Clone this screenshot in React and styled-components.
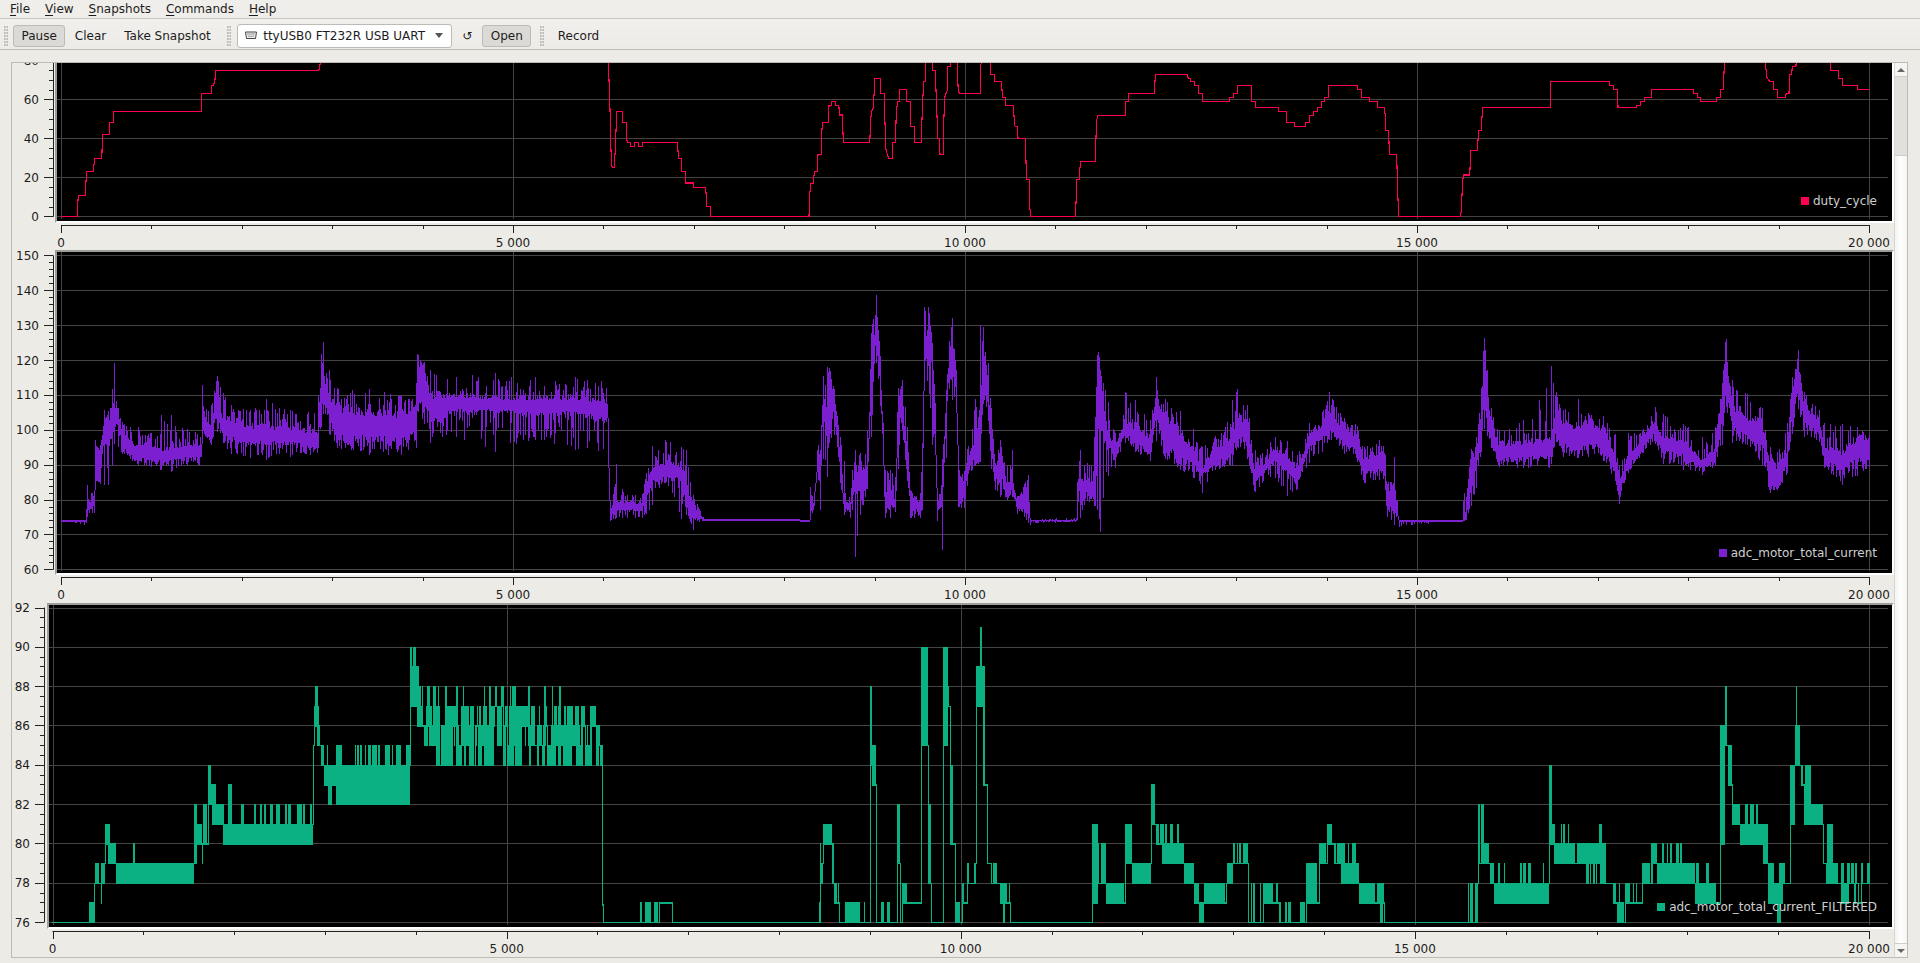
import React from 'react';
import styled, { createGlobalStyle } from 'styled-components';

const GlobalStyle = createGlobalStyle`
  html, body { margin: 0; height: 100%; overflow: hidden; }
  body { background: #edebe6; color: #1c1c1c; font: 12px "DejaVu Sans", sans-serif; }
`;

const Window = styled.div`
  height: 963px;
  display: flex;
  flex-direction: column;
`;

const MenuBar = styled.div`
  height: 18px;
  display: flex;
  align-items: center;
  padding-left: 4px;
  background: #f0eeea;
  border-bottom: 1px solid #c9c7c2;
`;

const MenuItem = styled.span`
  padding: 0 6px;
  margin-right: 3px;
  u { text-underline-offset: 2px; }
`;

const ToolBar = styled.div`
  height: 31px;
  box-sizing: border-box;
  display: flex;
  align-items: center;
  padding: 3px 0 0 4px;
  background: linear-gradient(#f2f0ed, #edebe6);
  border-bottom: 1px solid #bdbbb6;
`;

const Handle = styled.div`
  width: 4px;
  height: 20px;
  margin: ${(p) => p.$margin};
  background-image: radial-gradient(circle at 1px 1px, #bcbab5 1px, transparent 1.2px);
  background-size: 2.5px 3px;
`;

const ToolButton = styled.button`
  height: 22px;
  box-sizing: border-box;
  padding: 0 7.5px;
  margin-right: 1px;
  font: inherit;
  color: inherit;
  background: ${(p) => (p.$down ? '#dcdad6' : 'transparent')};
  border: 1px solid ${(p) => (p.$down ? '#bdbbb6' : 'transparent')};
  border-radius: 3px;
`;

const Combo = styled.div`
  width: 215px;
  height: 24px;
  box-sizing: border-box;
  display: flex;
  align-items: center;
  gap: 5px;
  padding: 0 6px;
  background: #fff;
  border: 1px solid #bdbbb6;
  border-radius: 3px;
`;

const ComboText = styled.span`
  flex: 1;
  white-space: nowrap;
`;

const ComboArrow = styled.span`
  width: 0;
  height: 0;
  margin-right: 2px;
  border: 4px solid transparent;
  border-top: 5px solid #555;
  border-bottom: 0;
`;

const Refresh = styled.span`
  width: 30px;
  text-align: center;
`;

const Frame = styled.div`
  height: 896px;
  box-sizing: border-box;
  margin: 12px 12px 0 11px;
  display: flex;
  overflow: hidden;
  border: 1px solid #bdbbb6;
`;

const Plots = styled.div`
  width: 1882px;
`;

const PlotBlock = styled.div`
  margin-top: ${(p) => p.$shift || 0}px;
`;

const PlotRow = styled.div`
  display: flex;
  height: ${(p) => p.$height}px;
`;

const Canvas = styled.div`
  position: relative;
  flex: 1;
  box-sizing: border-box;
  background: #000;
  border: 2px solid;
  border-color: #9f9d99 #fff #fff #9f9d99;
  overflow: hidden;
`;

const Chart = styled.svg`
  display: block;
`;

const Legend = styled.div`
  position: absolute;
  right: 15px;
  bottom: 12px;
  height: 16px;
  display: flex;
  align-items: center;
  gap: 4px;
  color: #cfcfcf;
`;

const Swatch = styled.span`
  width: 8px;
  height: 8px;
  background: ${(p) => p.$color};
`;

const AxisSvg = styled.svg`
  display: block;
  flex: none;
  font: 12px "DejaVu Sans", sans-serif;
  fill: #1c1c1c;
`;

const ScrollBar = styled.div`
  flex: 1;
  display: flex;
  flex-direction: column;
  background: linear-gradient(90deg, #f4f3f0, #fff 45%, #f6f5f2);
  border-left: 1px solid #d8d6d1;
`;

const ScrollButton = styled.div`
  height: 13px;
  display: flex;
  align-items: center;
  justify-content: center;
  background: #f6f5f2;
  border-${(p) => (p.$up ? 'bottom' : 'top')}: 1px solid #d0cec9;
  margin-top: ${(p) => (p.$up ? 0 : 'auto')};
  &::after {
    content: '';
    border: 4px solid transparent;
    border-${(p) => (p.$up ? 'top' : 'bottom')}: 0;
    border-${(p) => (p.$up ? 'bottom' : 'top')}: 4px solid #666;
  }
`;

const ScrollThumb = styled.div`
  height: 78px;
  background: #e1e0dc;
  border-bottom: 1px solid #cfcdc8;
`;

// zoom crops were read as [x, y...] with their own scale, put them back to page pixels
const toPage = (rows, baseX, baseY, sx, sy = 3) =>
  rows.map(([x, ...ys]) => [baseX + x / sx, ...ys.map((y) => baseY + y / sy)]);

const dutyA = toPage([
  [150,499],[190,499],[190,465],[192,436],[210,436],[210,414],[212,364],[229,364],[230,348],[232,325],[248,325],[250,308],
  [251,253],[268,253],[268,217],[278,217],[278,184],[493,184],[494,130],[518,130],[518,106],[524,106],[525,87],[528,87],
  [528,61],[781,61],[784,45],[785,30],
], 0, 50, 2.45);

const dutyB = toPage([
  [20,0],[20,8],[22,60],[24,122],[26,228],[28,312],[30,322],[36,322],[36,305],[39,220],[41,155],[55,155],[55,187],[65,187],
  [65,238],[68,247],[74,247],[75,259],[84,259],[85,247],[94,247],[95,259],[104,259],[105,247],[190,247],[192,295],[199,295],
  [201,334],[209,334],[210,369],[229,369],[230,382],[259,382],[260,405],[262,439],[270,439],[272,469],[512,469],[514,403],
  [516,370],[523,370],[525,334],[533,334],[534,284],[542,284],[544,207],[546,187],[560,187],[561,136],[567,136],[568,124],
  [576,124],[577,136],[585,136],[587,165],[594,165],[596,247],[661,247],[663,183],[665,155],[670,143],[673,55],[687,55],
  [688,100],[696,100],[698,177],[700,265],[704,283],[707,295],[716,295],[717,247],[724,247],[726,150],[730,124],[734,124],
  [735,88],[750,88],[751,124],[760,124],[761,199],[770,199],[771,247],[787,247],[790,143],[793,65],[797,65],[798,0],[814,0],
  [815,31],[822,31],[823,82],[826,177],[827,235],[832,235],[833,284],[842,284],[842,201],[844,115],[848,100],[851,90],
  [852,20],[858,20],[859,0],[876,0],[877,80],[880,100],[932,100],[933,15],[936,0],[956,0],[957,43],[966,43],[967,65],[984,65],
  [986,112],[993,112],[994,136],[1013,136],[1015,187],[1017,199],[1023,199],[1024,235],[1042,235],[1044,315],[1046,358],
  [1052,358],[1053,443],[1056,469],[1164,469],[1166,440],[1168,358],[1174,358],[1177,305],[1214,305],[1216,190],[1219,166],
  [1287,166],[1288,124],[1295,124],[1296,100],[1358,100],[1360,58],[1362,43],[1439,43],[1441,55],[1447,55],[1448,65],
  [1456,65],[1457,76],[1466,76],[1467,100],[1476,100],[1477,124],[1542,124],[1543,112],[1552,112],[1553,100],[1562,100],
  [1563,76],[1568,76],
], 600, 60, 2.45);

const dutyC = toPage([
  [0,76],[28,76],[29,124],[38,124],[39,142],[94,142],[95,154],[114,154],[115,187],[133,187],[134,199],[160,199],[161,187],
  [170,187],[171,166],[180,166],[181,154],[190,154],[191,142],[200,142],[201,124],[207,124],[208,112],[217,112],[218,76],
  [288,76],[289,88],[297,88],[298,112],[316,112],[317,124],[336,124],[337,142],[354,142],[356,172],[357,211],[363,211],
  [365,245],[366,283],[384,283],[385,333],[387,420],[389,469],[540,469],[543,445],[545,366],[548,345],[563,345],[565,271],
  [582,271],[584,211],[591,211],[593,172],[595,142],[760,142],[761,64],[905,64],[906,76],[915,76],[916,88],[925,88],[926,142],
  [971,142],[972,136],[980,136],[981,124],[990,124],[991,112],[1007,112],[1009,88],[1110,88],[1111,100],[1120,100],[1121,112],
  [1128,112],[1129,124],[1167,124],[1168,112],[1176,112],[1178,88],[1184,88],[1185,64],[1187,0],[1287,0],[1288,22],[1291,52],
  [1297,64],[1306,64],[1307,88],[1316,88],[1317,112],[1337,112],[1338,100],[1345,100],[1347,43],[1352,43],[1353,20],[1362,20],
  [1363,0],[1446,0],[1447,31],[1465,31],[1467,55],[1475,55],[1477,76],[1512,76],[1513,88],[1541,88],
], 1240, 60, 2.45);

const dutyPath = 'M' + [...dutyA, ...dutyB, ...dutyC].map(([x, y]) => `${x.toFixed(1)} ${y.toFixed(1)}`).join('L');

// current envelope: x, body top, body bottom, spike top, spike bottom
const currentEnv = [
  ...toPage([
    [4,570,572,570,572],[64,570,572,570,585],[65,560,572,560,585],[68,500,545,465,560],[80,520,540,490,545],[86,480,530,480,562],
    [88,340,420,330,450],[100,380,458,360,460],[110,260,340,240,465],[120,270,360,250,470],[130,230,350,205,430],[136,205,300,90,340],
    [146,240,290,230,350],[156,290,360,275,370],[175,320,380,290,385],[195,340,400,290,405],[230,340,395,310,410],[255,350,405,255,420],
    [280,345,405,255,425],[320,335,395,295,405],[358,335,395,310,415],[359,220,290,165,300],[380,290,340,240,352],[395,170,260,130,300],
    [410,250,320,185,335],[430,255,340,225,370],[480,280,350,240,385],[520,280,350,205,390],[580,285,350,240,382],[650,300,365,240,375],
    [659,135,230,80,300],[665,130,230,35,250],[680,180,280,120,310],[700,220,340,175,355],[780,235,340,175,375],[860,240,345,195,375],
    [900,215,320,175,375],[902,100,225,70,240],[920,100,225,95,280],[935,180,290,120,340],[1000,190,250,140,320],[1100,195,250,130,365],
    [1200,195,260,140,330],[1300,195,260,140,360],[1385,205,280,140,370],[1386,350,420,350,420],[1390,530,565,520,572],[1405,510,550,395,565],
    [1420,510,545,475,565],[1470,515,545,505,565],[1480,460,520,440,555],[1495,410,460,350,530],[1530,390,455,330,460],[1568,400,455,350,570],
  ], 60, 330, 2.529),
  [686, 480, 505, 450, 515], [693, 505, 520, 495, 530], [704, 519, 520, 519, 520], [799, 519, 520, 519, 520],
  ...toPage([
    [0,750,752,750,752],[28,750,752,750,752],[29,650,730,645,750],[40,700,722,695,730],[52,545,595,520,600],[60,560,585,540,720],
    [68,360,450,320,560],[80,400,510,290,640],[86,295,490,290,520],[100,350,440,340,490],[110,460,515,430,520],[120,540,620,500,640],
    [130,680,725,560,735],[150,700,725,695,745],[156,640,690,600,720],[165,580,680,540,860],[180,585,680,550,735],[200,590,650,510,670],
    [212,310,420,200,520],[226,110,240,48,260],[238,230,360,215,370],[248,440,545,430,555],[254,680,735,600,745],[270,630,720,600,745],
    [285,690,720,620,725],[292,370,430,360,620],[305,390,470,320,470],[320,520,600,450,620],[330,670,725,660,745],[360,695,722,670,745],
    [366,520,720,520,720],[372,170,280,110,350],[385,170,290,110,335],[395,210,290,200,520],[405,420,520,400,555],[410,705,730,700,745],
    [425,650,720,585,860],[436,395,510,395,625],[445,260,330,235,350],[455,190,330,130,385],[468,340,365,300,430],[474,625,710,570,710],
    [490,630,700,620,730],[500,560,630,540,650],[515,535,575,490,600],[540,395,575,165,575],[548,180,380,165,400],[562,330,410,250,420],
    [572,430,570,400,590],[585,590,640,580,660],[600,520,610,510,680],[620,640,680,590,690],[636,620,660,540,680],[650,690,725,680,730],
    [684,620,720,615,760],[690,750,752,750,765],[829,750,752,740,752],[830,650,720,645,750],[840,620,650,540,745],[860,630,670,580,690],
    [880,630,700,560,705],[890,390,600,260,720],[895,240,320,235,720],
  ], 800, 270, 3),
  ...toPage([
    [0,150,330,150,635],[15,340,380,240,470],[30,370,420,340,445],[50,290,350,215,370],[70,320,380,240,395],[100,340,410,305,425],
    [112,200,310,170,360],[130,280,400,235,415],[160,320,430,270,450],[185,380,440,320,470],[205,440,470,380,520],[230,380,440,350,450],
    [265,340,410,240,440],[275,270,350,205,380],[295,300,390,250,415],[310,440,500,390,520],[325,430,470,400,490],[350,380,430,350,470],
    [375,400,460,360,530],[395,440,500,410,510],[420,340,390,310,430],[445,310,360,280,400],[460,260,340,215,360],[490,320,385,295,400],
    [515,340,400,310,420],[530,410,470,380,490],[560,390,460,360,480],[572,385,470,380,490],[576,530,575,500,590],[590,470,580,390,615],
    [600,600,603,600,620],[729,600,603,600,603],[730,600,603,510,603],[735,560,600,540,603],[745,395,530,390,560],[755,400,455,360,510],
    [765,280,370,240,410],[770,80,280,25,320],[785,290,360,260,380],[800,370,425,330,440],[850,360,425,300,445],[905,350,415,125,445],
    [915,250,350,210,360],[930,300,390,270,410],[960,310,400,235,415],[980,290,380,280,410],[1010,320,400,285,420],[1035,400,460,340,480],
    [1043,480,530,440,552],[1060,400,450,340,460],[1090,350,390,330,400],[1115,290,350,260,370],[1130,350,400,280,430],[1170,350,420,310,450],
    [1210,420,450,350,465],[1235,380,430,330,440],[1250,220,320,195,380],[1257,80,200,45,250],[1270,250,330,180,370],[1300,290,360,220,375],
    [1330,300,370,260,430],[1345,420,490,380,520],[1360,430,510,400,510],[1380,380,450,320,470],[1390,190,300,180,350],[1402,110,230,80,260],
    [1415,250,320,215,350],[1445,290,350,270,365],[1455,370,430,310,445],[1490,390,460,310,495],[1520,350,430,320,470],[1547,345,420,340,440],
  ], 1100, 320, 2.01),
];

const makeRandom = (seed) => () => {
  seed = (seed * 1664525 + 1013904223) % 4294967296;
  return seed / 4294967296;
};

const buildCurrentPath = () => {
  const rnd = makeRandom(11);
  let out = '';
  let i = 0;
  let prevTop = null;
  let prevBottom = null;
  for (let x = 61; x <= 1869; x++) {
    let hitKey = false;
    while (i < currentEnv.length - 2 && currentEnv[i + 1][0] <= x) {
      i++;
      hitKey = true;
    }
    const a = currentEnv[i];
    const b = currentEnv[i + 1];
    const t = Math.max(0, Math.min(1, (x - a[0]) / Math.max(b[0] - a[0], 0.01)));
    const at = (k) => a[k] + (b[k] - a[k]) * t;
    const body = at(2) - at(1);
    let top = at(1) + rnd() * body * 0.25;
    let bottom = at(2) - rnd() * body * 0.25;
    if (rnd() < 0.5) top = at(3) + (at(1) - at(3)) * rnd();
    if (rnd() < 0.5) bottom = at(4) - (at(4) - at(2)) * rnd();
    if (hitKey) {
      top = at(3);
      bottom = at(4);
    }
    if (prevTop !== null) {
      // the trace is one line: a column always touches the one before it
      if (bottom < prevTop) bottom = prevTop;
      if (top > prevBottom) top = prevBottom;
    }
    if (bottom - top < 1.5) bottom = top + 1.5;
    out += `M${x + 0.5} ${top.toFixed(1)}V${bottom.toFixed(1)}`;
    prevTop = top;
    prevBottom = bottom;
  }
  return out;
};

// filtered trace: x0, x1, low value, high value, how much of the span is filled
const level = (v) => 922 - (v - 76) * 19.66;

const filteredA = [
  [88,108,76,77,.7],[108,111,76,78,1],[110,120,78,79,1],[125,135,78,79,.6],[125,127,77,78,1],[135,148,80,81,1],[135,148,79,80,.3],
  [145,162,79,80,1],[162,352,78,79,1],[162,352,79,80,.02],[352,360,79,82,.8],[360,372,80,81,1],[372,376,79,80,.5],[375,386,80,82,.6],
  [388,394,83,84,1],[386,407,82,83,.9],[397,425,81,82,1],[425,645,80,81,1],[425,645,81,82,.55],[435,445,82,83,.4],[645,648,81,85,1],
  [647,660,86,87,1],[650,657,87,88,1],[645,670,85,86,.5],[660,682,84,85,.7],[672,882,83,84,1],[700,882,82,83,1],[682,700,82,83,.5],
  [682,882,84,85,.4],[882,885,84,89,1],[883,896,89,90,.8],[883,905,88,89,.9],[883,915,87,88,.9],[900,915,86,87,.7],[915,945,85,86,.7],
  [945,1355,84,85,.65],[915,1350,85,86,.7],[915,1340,86,87,.6],[920,1270,87,88,.2],[1352,1355,76.9,84,1],[1372,1385,76,77,.5],
  [1445,1450,76,77,.7],[1458,1490,76,77,.6],[1492,1525,77,77,1],[1525,1526,76,77,1],
];

const filteredB = [
  [18,30,76,77,.5],[22,30,78,80,.4],[30,34,78,79,.5],[34,46,80,81,.9],[44,50,78,80,.7],[50,56,77,78,.8],[66,95,76,77,.95],
  [97,103,80,88,.3],[102,105,84,88,1],[105,110,83,85,1],[110,116,78,80,.4],[118,130,76,77,.4],[135,145,79,82,.4],[148,155,77,78,1],
  [172,176,76,84,.3],[176,186,85,90,.8],[180,186,86,88,1],[186,190,78,82,.4],[208,218,85,90,.5],[212,216,87,88,1],[218,224,80,84,.5],
  [225,232,76,77,1],[232,238,77,78,.7],[238,256,78,79,.5],[256,268,87,89,1],[262,264,89,91,1],[266,270,83,85,.7],[270,278,79,81,.5],
  [278,290,78,79,.8],[290,305,77,78,.6],[295,297,76,77,1],[424,432,77,81,.7],[426,432,80,81,1],[432,445,78,80,.8],[445,470,77,78,.95],
  [470,482,79,81,.5],[482,510,78,79,1],[510,515,81,83,.9],[515,555,80,81,.5],[525,558,79,80,.95],[558,572,78,79,.9],[572,580,77,78,.9],
  [580,587,76,77,.9],[587,620,77,78,.95],[620,628,78,79,.8],[628,650,79,80,.7],[650,672,76,78,.7],[672,695,77,78,.5],[695,735,76,77,.4],
  [735,750,77,79,.7],[750,765,79,80,.9],[765,772,80,81,1],[770,810,79,80,.7],[785,812,78,79,.95],[812,848,77,78,.6],[838,848,76,77,.3],
  [970,985,76,78,.6],[985,993,79,82,.7],[993,1000,79,80,.7],[1000,1008,78,79,.8],[1008,1088,77,78,1],[1008,1088,78,79,.25],[1088,1092,80,84,.8],
  [1092,1096,80,81,.8],[1095,1170,79,80,.95],[1095,1170,80,81,.3],[1140,1170,78,79,.8],[1180,1190,77,78,.9],[1187,1197,76,77,.8],[1198,1220,77,78,.7],
  [1220,1238,78,79,.8],[1235,1245,79,80,1],[1245,1300,78,79,1],[1238,1280,79,80,.4],[1300,1330,77,78,1],[1300,1330,78,79,.3],
  [1336,1343,80,86,.8],[1343,1346,85,88,1],[1348,1353,83,85,1],[1353,1365,81,82,1],[1365,1400,80,81,1],[1365,1398,81,82,.5],
  [1398,1405,79,81,.7],[1405,1430,78,79,.5],[1405,1428,77,78,.8],[1415,1425,76,77,.8],[1437,1445,81,84,1],[1445,1452,84,86,.9],
  [1446,1448,86,88,1],[1452,1468,83,84,.8],[1458,1485,81,82,1],[1485,1500,79,81,.7],[1490,1525,78,79,.7],[1510,1525,77,78,.9],
  [1525,1555,78,79,.5],[1530,1540,77,78,.7],
];

// stretches where the trace rests on 76, in page pixels
const restSpans = [
  [52, 86], [603, 812], [1010, 1092], [1384, 1468],
  ...[[56, 66], [95, 118], [130, 148], [190, 205]].map(([a, b]) => [800 + a / 1.452, 800 + b / 1.452]),
];

const buildFilteredPath = () => {
  const rnd = makeRandom(29);
  const layers = [
    ...filteredA.map(([a, b, lo, hi, d]) => [50 + a / 2.45, 50 + b / 2.45, lo, hi, d]),
    ...filteredB.map(([a, b, lo, hi, d]) => [800 + a / 1.452, 800 + b / 1.452, lo, hi, d]),
  ];
  const cols = {};
  layers.forEach(([a, b, lo, hi, d]) => {
    let x = Math.round(a);
    const end = Math.max(Math.round(b), x + 1);
    while (x < end) {
      const run = d >= 1 ? end - x : 1 + Math.floor(rnd() * 2.5);
      if (d >= 1 || rnd() < d) {
        for (let c = x; c < Math.min(x + run, end); c++) {
          const col = cols[c] || { lo, hi };
          cols[c] = { lo: Math.min(col.lo, lo), hi: Math.max(col.hi, hi) };
        }
      }
      x += run;
    }
  });
  let out = '';
  let prev = { lo: 76, hi: 76 };
  for (let x = 52; x <= 1869; x++) {
    let col = cols[x];
    if (!col) {
      const resting = restSpans.some(([a, b]) => x >= a && x <= b);
      col = resting ? { lo: 76, hi: 76 } : { lo: prev.lo, hi: prev.lo };
    }
    const lo = Math.min(col.lo, prev.hi);
    const hi = Math.max(col.hi, prev.lo);
    out += `M${x + 0.5} ${level(hi).toFixed(1)}V${(level(lo) + 1.2).toFixed(1)}`;
    prev = col;
  }
  return out;
};

const plots = [
  {
    name: 'duty_cycle', color: '#ff0050', shift: -2, height: 162, axisHeight: 27,
    left: 55, top: 61, x0: 61, x1: 1869, axisLeft: 53, paths: [dutyPath],
    majors: [80, 60, 40, 20, 0], step: 20, pxStep: 39, y0: 216.3, divisions: 4,
  },
  {
    name: 'adc_motor_total_current', color: '#7b1fd1', height: 325, axisHeight: 28,
    left: 55, top: 250, x0: 61, x1: 1869, axisLeft: 53,
    paths: [buildCurrentPath()],
    majors: [150, 140, 130, 120, 110, 100, 90, 80, 70, 60], step: 10, pxStep: 34.88, y0: 569.3, divisions: 5,
  },
  {
    name: 'adc_motor_total_current_FILTERED', color: '#0bb183', height: 326, axisHeight: 28,
    left: 47, top: 603, x0: 52.5, x1: 1869, axisLeft: 44,
    paths: [buildFilteredPath()],
    majors: [92, 90, 88, 86, 84, 82, 80, 78, 76], step: 2, pxStep: 39.31, y0: 922, divisions: 4,
  },
];

const PAGE_LEFT = 12;
const CANVAS_RIGHT = 1890;

const Plot = ({ plot }) => {
  const { left, top, height, axisHeight, x0, x1, axisLeft, majors, pxStep, y0, divisions } = plot;
  const innerLeft = left + 2;
  const innerTop = top + 2;
  const innerW = CANVAS_RIGHT - innerLeft;
  const innerH = height - 4;
  const last = majors.length - 1;
  const ys = majors.map((_, i) => y0 - (last - i) * pxStep);
  const xAt = (v) => x0 + ((x1 - x0) * v) / 20000;
  const xTicks = Array.from({ length: 21 }, (_, i) => i * 1000);
  const minors = [];
  for (let y = y0; y > top - 10; y -= pxStep / divisions) minors.push(y);

  return (
    <PlotBlock $shift={plot.shift}>
      <PlotRow $height={height}>
        <AxisSvg width={left - PAGE_LEFT} height={height} viewBox={`${PAGE_LEFT} ${top} ${left - PAGE_LEFT} ${height}`}>
          <path d={`M${axisLeft + 0.5} ${ys[0]}V${y0 + 0.5}`} stroke="#222" fill="none" />
          {minors.map((y) => (
            <path key={y} d={`M${axisLeft - 4} ${Math.round(y) + 0.5}H${axisLeft}`} stroke="#222" fill="none" />
          ))}
          {majors.map((v, i) => (
            <g key={v}>
              <path d={`M${axisLeft - 9} ${Math.round(ys[i]) + 0.5}H${axisLeft}`} stroke="#222" fill="none" />
              <text x={axisLeft - 14} y={ys[i] + 4.5} textAnchor="end">{v}</text>
            </g>
          ))}
        </AxisSvg>
        <Canvas>
          <Chart width={innerW} height={innerH} viewBox={`${innerLeft} ${innerTop} ${innerW} ${innerH}`}>
            <g stroke="#444" fill="none">
              {ys.map((y) => <path key={y} d={`M${innerLeft} ${Math.round(y) + 0.5}H${CANVAS_RIGHT - 2}`} />)}
              {[0, 5000, 10000, 15000, 20000].map((v) => (
                <path key={v} d={`M${Math.round(xAt(v)) + 0.5} ${innerTop}V${innerTop + innerH - 2}`} />
              ))}
            </g>
            {plot.paths.map((d, i) => (
              <path key={i} d={d} stroke={plot.color} strokeWidth="1.1" fill="none" shapeRendering="crispEdges" />
            ))}
          </Chart>
          <Legend>
            <Swatch $color={plot.color} />
            {plot.name}
          </Legend>
        </Canvas>
      </PlotRow>
      <AxisSvg width="1882" height={axisHeight} viewBox={`${PAGE_LEFT} ${top + height} 1882 ${axisHeight}`}>
        <path d={`M${xAt(0)} ${top + height + 2.5}H${xAt(20000) + 0.5}`} stroke="#222" fill="none" />
        {xTicks.map((v) => {
          const major = v % 5000 === 0;
          return (
            <path key={v} d={`M${Math.round(xAt(v)) + 0.5} ${top + height + 2}v${major ? 8 : 4}`} stroke="#222" fill="none" />
          );
        })}
        {[0, 5000, 10000, 15000, 20000].map((v) => (
          <text key={v} x={xAt(v)} y={top + height + 24} textAnchor="middle">
            {v === 0 ? '0' : `${v / 1000} 000`}
          </text>
        ))}
      </AxisSvg>
    </PlotBlock>
  );
};

const SerialIcon = () => (
  <svg width="14" height="9" viewBox="0 0 14 9">
    <path d="M1.5 1h11l-1 6.5h-9z" fill="#eee" stroke="#444" />
    <path d="M3.5 3h7M4.5 5.2h5" stroke="#444" strokeDasharray="1 1" fill="none" />
  </svg>
);

export default function App() {
  return (
    <Window>
      <GlobalStyle />
      <MenuBar>
        <MenuItem><u>F</u>ile</MenuItem>
        <MenuItem><u>V</u>iew</MenuItem>
        <MenuItem><u>S</u>napshots</MenuItem>
        <MenuItem><u>C</u>ommands</MenuItem>
        <MenuItem><u>H</u>elp</MenuItem>
      </MenuBar>
      <ToolBar>
        <Handle $margin="0 5px 0 0" />
        <ToolButton $down>Pause</ToolButton>
        <ToolButton>Clear</ToolButton>
        <ToolButton>Take Snapshot</ToolButton>
        <Handle $margin="0 6px 0 7px" />
        <Combo>
          <SerialIcon />
          <ComboText>ttyUSB0 FT232R USB UART</ComboText>
          <ComboArrow />
        </Combo>
        <Refresh>↺</Refresh>
        <ToolButton $down>Open</ToolButton>
        <Handle $margin="0 5px 0 8px" />
        <ToolButton>Record</ToolButton>
      </ToolBar>
      <Frame>
        <Plots>
          {plots.map((p) => <Plot key={p.name} plot={p} />)}
        </Plots>
        <ScrollBar>
          <ScrollButton $up />
          <ScrollThumb />
          <ScrollButton />
        </ScrollBar>
      </Frame>
    </Window>
  );
}
